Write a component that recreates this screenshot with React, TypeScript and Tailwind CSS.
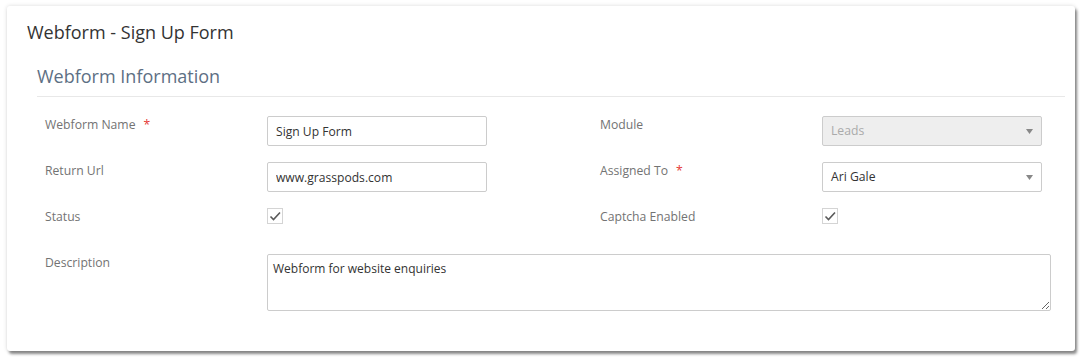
import React from 'react';

const Label: React.FC<{ text: string; required?: boolean }> = ({ text, required }) => (
  <div className="w-[222px] shrink-0 text-[12.2px] leading-[17px] text-[#737373]">
    {text}
    {required && <span className="ml-[8px] text-[#e53935]">*</span>}
  </div>
);

const TextInput: React.FC<{ value: string }> = ({ value }) => (
  <input
    readOnly
    defaultValue={value}
    className="h-[30px] w-[220px] rounded-[2px] border border-[#ccc] bg-white px-[8px] text-[12.1px] text-[#333] outline-none"
  />
);

const Select: React.FC<{ value: string; disabled?: boolean }> = ({ value, disabled }) => (
  <div
    className={
      disabled
        ? 'flex h-[30px] w-[220px] items-center justify-between rounded-[2px] border border-[#ccc] bg-[#eee] pl-[8px] pr-[8px] text-[12.2px] text-[#aaa]'
        : 'flex h-[30px] w-[220px] items-center justify-between rounded-[2px] border border-[#ccc] bg-white pl-[8px] pr-[8px] text-[12.2px] text-[#333]'
    }
  >
    <span>{value}</span>
    <svg width="7" height="5" viewBox="0 0 7 5">
      <path d="M0 0 L7 0 L3.5 5 Z" fill="#888" />
    </svg>
  </div>
);

const Check: React.FC = () => (
  <div className="flex h-[16px] w-[16px] items-center justify-center border border-[#d4d4d4] bg-white">
    <svg width="12" height="10" viewBox="0 0 12 10">
      <path d="M1.5 5.5 L4.5 8.5 L11 1.5" fill="none" stroke="#5a5a5a" strokeWidth="1.6" />
    </svg>
  </div>
);

export default function App() {
  return (
    <div className="min-h-screen bg-white pl-[7px] pt-[6px] font-['Open_Sans',sans-serif]">
      <div className="h-[345px] w-[1068px] rounded-[3px] bg-white pt-[14px] shadow-[2px_3px_3px_rgba(0,0,0,0.45),0_0_4px_rgba(0,0,0,0.15)]">
        <h2 className="pl-[20px] text-[18px] leading-[25px] text-[#333]">Webform - Sign Up Form</h2>
        <div className="ml-[30px] mr-[10px] mt-[18px]">
          <h3 className="border-b border-[#e8e8e8] pb-[7px] text-[18px] leading-[26px] text-[#5d6f84]">
            Webform Information
          </h3>
          <div className="mt-[19px] flex flex-col gap-[16px] pl-[8px]">
            <div className="flex h-[30px] items-start">
              <Label text="Webform Name" required />
              <TextInput value="Sign Up Form" />
              <div className="w-[113px] shrink-0" />
              <Label text="Module" />
              <Select value="Leads" disabled />
            </div>
            <div className="flex h-[30px] items-start">
              <Label text="Return Url" />
              <TextInput value="www.grasspods.com" />
              <div className="w-[113px] shrink-0" />
              <Label text="Assigned To" required />
              <Select value="Ari Gale" />
            </div>
            <div className="flex h-[30px] items-start">
              <Label text="Status" />
              <div className="w-[220px] shrink-0">
                <Check />
              </div>
              <div className="w-[113px] shrink-0" />
              <Label text="Captcha Enabled" />
              <Check />
            </div>
            <div className="flex items-start">
              <Label text="Description" />
              <textarea
                readOnly
                defaultValue="Webform for website enquiries"
                className="h-[57px] w-[784px] rounded-[2px] border border-[#ccc] bg-white px-[5px] py-[5px] text-[12px] leading-[18px] text-[#333] outline-none"
              />
            </div>
          </div>
        </div>
      </div>
    </div>
  );
}
